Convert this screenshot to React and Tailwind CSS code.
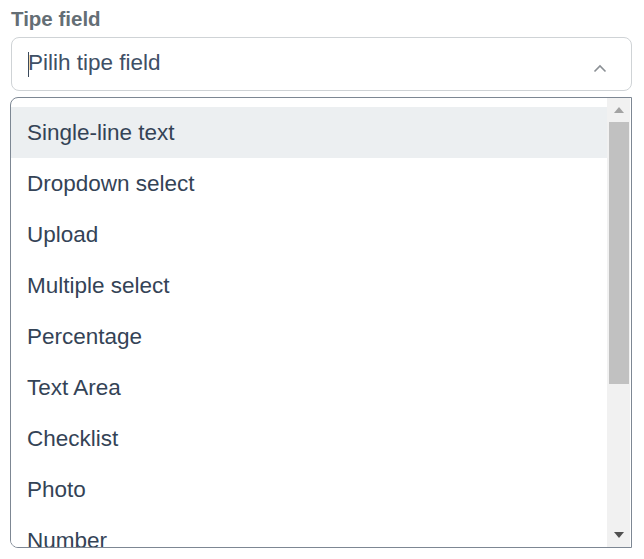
import React from "react";

const options = [
  "Single-line text",
  "Dropdown select",
  "Upload",
  "Multiple select",
  "Percentage",
  "Text Area",
  "Checklist",
  "Photo",
  "Number",
];

function App() {
  return (
    <div
      className="w-[644px] h-[559px] bg-white px-[10px] pt-[7px] overflow-hidden"
      style={{ fontFamily: '"Liberation Sans", Arial, sans-serif' }}
    >
      <div className="pl-[1px] text-[20.5px] leading-[24px] font-bold text-[#646e75]">Tipe field</div>

      <div className="mt-[6px] ml-[1px] w-[621px] h-[54px] border border-[#cfd3d6] rounded-[8px] flex items-center pl-[16px] pr-[24px]">
        <span className="w-[1px] h-[25px] bg-[#3b4a5c] mr-[-1px]" />
        <span className="text-[22.5px] text-[#3f5066] leading-none flex-1 mt-[-1px]">Pilih tipe field</span>
        <svg width="14" height="9" viewBox="0 0 14 9" className="mt-[8px]">
          <path d="M1.5 7.5 L7 2 L12.5 7.5" fill="none" stroke="#8a8f94" strokeWidth="1.6" />
        </svg>
      </div>

      <div className="mt-[6px] w-[622px] h-[451px] border border-[#7d8793] rounded-tl-[8px] rounded-bl-[8px] flex overflow-hidden">
        <div className="flex-1 pt-[9px] overflow-hidden">
          {options.map((o, i) => (
            <div
              key={o}
              className={
                "h-[51px] flex items-center pl-[16px] text-[22.5px] text-[#344356] " +
                (i === 0 ? "bg-[#eceff1]" : "bg-white")
              }
            >
              {o}
            </div>
          ))}
        </div>
        <div className="w-[23px] bg-[#f1f1f1] flex flex-col items-center mr-[1px]">
          <div className="h-[24px] w-full flex items-center justify-center">
            <svg width="10" height="6" viewBox="0 0 10 6">
              <path d="M0 6 L5 0 L10 6 Z" fill="#a3a3a3" />
            </svg>
          </div>
          <div className="w-[20px] h-[262px] bg-[#c1c1c1]" />
          <div className="flex-1" />
          <div className="h-[24px] w-full flex items-center justify-center">
            <svg width="10" height="6" viewBox="0 0 10 6">
              <path d="M0 0 L10 0 L5 6 Z" fill="#505050" />
            </svg>
          </div>
        </div>
      </div>
    </div>
  );
}

export default App;
